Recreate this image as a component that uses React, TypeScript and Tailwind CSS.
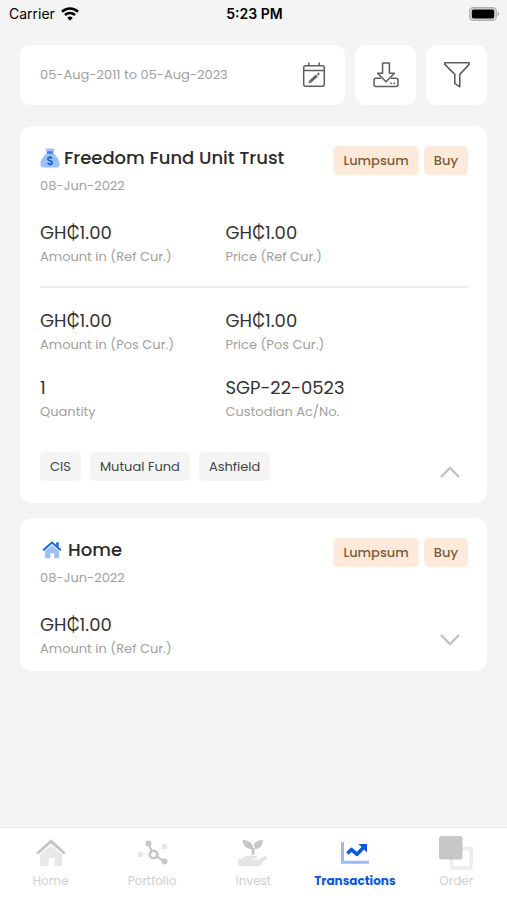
import type { ReactNode } from "react";

function WifiIcon() {
  return (
    <svg width="18" height="14" viewBox="0 0 18 14" fill="none" stroke="#000" strokeWidth="2.6" aria-hidden="true">
      <path d="M1 4.8a11.4 11.4 0 0 1 16 0" />
      <path d="M4 8a7.2 7.2 0 0 1 10 0" />
      <path d="M9 13.8 6.3 10.8a4 4 0 0 1 5.4 0Z" fill="#000" stroke="none" />
    </svg>
  );
}

function BatteryIcon() {
  return (
    <svg width="31" height="14" viewBox="0 0 31 14" aria-hidden="true">
      <rect x="0.75" y="0.75" width="26.5" height="12.5" rx="3.5" fill="#e0e0e0" stroke="#b0b0b0" strokeWidth="1.3" />
      <rect x="2.8" y="2.6" width="22.4" height="8.8" rx="1.6" fill="#000" />
      <path d="M28.7 4.8c2 .8 2 3.6 0 4.4Z" fill="#a8a8a8" />
    </svg>
  );
}

function CalendarIcon() {
  return (
    <svg width="24" height="26" viewBox="0 0 24 26" fill="none" stroke="#5e5e5e" strokeWidth="1.5" aria-hidden="true">
      <rect x="1.7" y="3.7" width="20.6" height="20.6" rx="2" />
      <path d="M1.7 8.6h20.600M6.8 0.500v3.500M17.200 0.500v3.500" />
      <path d="m8.600 19.200 6.200-5.800" strokeWidth="2.8" />
      <path d="m6.800 21 .7-2.400 1.700 1.800ZM15.2 12l1.400-1.200 1 1.100-1.400 1.300Z" fill="#5e5e5e" strokeWidth="0.6" />
    </svg>
  );
}

function DownloadIcon() {
  return (
    <svg width="26" height="26" viewBox="0 0 26 26" fill="none" stroke="#5e5e5e" strokeWidth="1.5" strokeLinejoin="round" aria-hidden="true">
      <path d="M9.6 1h6.8v10.200h5L13 19.800l-8.400-8.600h5Z" />
      <path d="M8 16.200H3a2 2 0 0 0-2 2v4.4a2 2 0 0 0 2 2h20a2 2 0 0 0 2-2v-4.4a2 2 0 0 0-2-2h-5" />
      <path d="M17.2 21.2h1.6M20.4 21.2H22" />
    </svg>
  );
}

function FilterIcon() {
  return (
    <svg width="28" height="28" viewBox="0 0 28 28" fill="none" stroke="#5e5e5e" strokeWidth="1.6" strokeLinejoin="round" aria-hidden="true">
      <path d="M1.8 1.8h24.4v1.600L16.800 13.400v12.400l-5-3.400V13.400L1.8 3.400Z" />
    </svg>
  );
}

function MoneyBagIcon() {
  return (
    <svg width="20" height="20" viewBox="0 0 20 20" aria-hidden="true">
      <path d="M5.2.4c1.600.6 2.900.2 4.700.2s3.200.4 4.800-.2L13 4.200H7Z" fill="#9dc0fa" />
      <path d="M6.600 5.600h6.800c3.200 2.200 6.200 6.600 6.200 10.600 0 2.200-1.200 3.400-3.400 3.400H3.800c-2.200 0-3.400-1.200-3.400-3.400 0-4 3-8.400 6.200-10.600Z" fill="#9dc0fa" />
      <path d="M6.800 3.300h6.400v2.500H6.800Z" fill="#3f7ff0" />
      <path d="M12.200 10.400c-.5-.8-1.300-1-2.200-1-1.300 0-2.200.6-2.200 1.600 0 2.300 4.600 1 4.600 3.400 0 1-1 1.700-2.300 1.700-1.200 0-2.100-.4-2.500-1.200M10 8v1.400M10 16v1.600" fill="none" stroke="#0b5be0" strokeWidth="1.500" />
    </svg>
  );
}

function HouseIcon({ className, roof, wall, chimney }: { className: string; roof: string; wall: string; chimney?: boolean }) {
  return (
    <svg className={className} viewBox="0 0 30 28" aria-hidden="true">
      <path d="M4 15.500 15 6.500l11 9V27h-7.500v-8h-6v8H4Z" fill={wall} />
      <path d="M1.300 14.500 15 2.300l13.700 12.200" fill="none" stroke={roof} strokeWidth="3" />
      {chimney && <path d="M21.500 2h4v8l-4-3Z" fill={roof} />}
    </svg>
  );
}

function PortfolioIcon() {
  return (
    <svg width="32" height="26" viewBox="0 0 32 26" aria-hidden="true">
      <path d="M4.500 14.500 17 14l11-7" fill="none" stroke="#f2f2f2" strokeWidth="1.200" />
      <circle cx="4.500" cy="14.500" r="2.700" fill="#e4e4e4" />
      <circle cx="28.500" cy="6.500" r="2.700" fill="#e4e4e4" />
      <path d="m12 3.500 5.500 11 11 7" fill="none" stroke="#c6c6c6" strokeWidth="2.200" />
      <circle cx="12.500" cy="3.500" r="3" fill="#c6c6c6" />
      <circle cx="28.500" cy="21.500" r="3" fill="#c6c6c6" />
      <circle cx="17.500" cy="14.500" r="3.800" fill="#fff" stroke="#c6c6c6" strokeWidth="2.600" />
    </svg>
  );
}

function InvestIcon() {
  return (
    <svg width="30" height="28" viewBox="0 0 30 28" aria-hidden="true">
      <path d="M4.500 1c6 0 10.300 2.600 10.800 9.200C9 10.400 4.800 7.200 4.500 1Z" fill="#c6c6c6" />
      <path d="M24.800 1c0 5.400-2.600 8.600-7.600 9.200-.5-2-.8-3-1.600-4.400C17.400 2.600 20.400 1 24.800 1Z" fill="#c6c6c6" />
      <path d="M13.600 9h3v6.800h-3Z" fill="#c6c6c6" />
      <path d="M0 20h4c2.500-2.800 5-3.200 8-3.200h6c2 0 2 3 0 3h-4v1h6l6.500-3.600c1.800-1 3.500.5 2.400 2L23.500 25c-1 1.400-2 2-4 2H0Z" fill="#e4e4e4" />
    </svg>
  );
}

function TransactionsIcon() {
  return (
    <svg width="28" height="22" viewBox="0 0 28 22" fill="none" aria-hidden="true">
      <path d="M1.500 0v20.200H28" stroke="#9db9f2" strokeWidth="3" />
      <path d="m6.500 11.500 4-4 5.500 4.800 6-6.300" stroke="#0b57e0" strokeWidth="3.600" strokeLinejoin="round" />
      <path d="M17.500 2H26v8.500Z" fill="#0b57e0" />
    </svg>
  );
}

function OrderIcon() {
  return (
    <svg width="34" height="34" viewBox="0 0 34 34" aria-hidden="true">
      <path d="M12.500 12.500h19.500v19.500H12.500Z" fill="none" stroke="#ececec" strokeWidth="3.400" />
      <rect x="0" y="0" width="23.500" height="23.500" rx="2.500" fill="#c8c8c8" />
    </svg>
  );
}

function Chevron({ up }: { up: boolean }) {
  return (
    <svg width="20" height="12" viewBox="0 0 20 12" fill="none" stroke="#c4c4c4" strokeWidth="2.400" aria-hidden="true">
      <path d={up ? "M1 11 10 2l9 9" : "m1 1 9 9 9-9"} />
    </svg>
  );
}

function Field({ value, label }: { value: string; label: string }) {
  return (
    <div>
      <dd className="text-[18px] leading-6 text-[#333333]">{value}</dd>
      <dt className="mt-[3px] text-[13px] leading-[18px] text-[#a0a0a0]">{label}</dt>
    </div>
  );
}

function CardHeader({ icon, title, gap }: { icon: ReactNode; title: string; gap: string }) {
  return (
    <header className="flex items-start justify-between">
      <div>
        <h2 className={`flex items-center text-[18px] leading-6 font-medium text-[#2b2b2b] ${gap}`}>
          {icon}
          {title}
        </h2>
        <p className="mt-[7px] text-[13px] leading-[18px] text-[#a0a0a0]">08-Jun-2022</p>
      </div>
      <div className="flex gap-[5px] text-[13px] leading-[29px] font-medium text-[#7d5a37]">
        <span className="rounded-[5px] bg-[#feeadb] px-[10px]">Lumpsum</span>
        <span className="rounded-[5px] bg-[#feeadb] px-[10px]">Buy</span>
      </div>
    </header>
  );
}

function ToggleButton({ up }: { up: boolean }) {
  return (
    <button
      type="button"
      aria-expanded={up}
      aria-label={up ? "Hide details" : "Show details"}
      className="flex h-9 w-9 items-center justify-center"
    >
      <Chevron up={up} />
    </button>
  );
}

const cardClass = "rounded-[12px] bg-white pr-[19px] pl-5 pt-5 pb-[13px]";
const columns = "grid grid-cols-[13fr_17fr]";

const tabs = [
  { label: "Home", icon: <HouseIcon className="h-[28px] w-[30px]" roof="#c6c6c6" wall="#e8e8e8" /> },
  { label: "Portfolio", icon: <PortfolioIcon /> },
  { label: "Invest", icon: <InvestIcon /> },
  { label: "Transactions", icon: <TransactionsIcon />, active: true },
  { label: "Order", icon: <OrderIcon /> },
];

export default function App() {
  return (
    <div className="flex min-h-screen flex-col bg-[#f4f4f4] font-['Poppins','Inter','Noto_Sans',sans-serif]">
      <div className="grid h-7 grid-cols-3 items-center pr-[7px] pl-[9px] font-['Inter',sans-serif] text-[14px] leading-5 text-black">
        <div className="flex items-center gap-[6px]">
          Carrier
          <WifiIcon />
        </div>
        <div className="text-center font-semibold">5:23 PM</div>
        <div className="flex justify-end">
          <BatteryIcon />
        </div>
      </div>

      <main className="flex-1 px-5 pt-[17px] pb-5">
        <div className="flex h-[60px] gap-[10px]">
          <div className="flex min-w-0 flex-1 items-center rounded-[10px] bg-white pr-[19px] pl-5">
            <input
              type="text"
              readOnly
              aria-label="Date range"
              defaultValue="05-Aug-2011 to 05-Aug-2023"
              className="min-w-0 flex-1 bg-transparent text-[13px] leading-5 text-[#a0a0a0] outline-none"
            />
            <button type="button" aria-label="Pick dates">
              <CalendarIcon />
            </button>
          </div>
          <button type="button" aria-label="Download" className="flex w-[61px] items-center justify-center rounded-[10px] bg-white">
            <DownloadIcon />
          </button>
          <button type="button" aria-label="Filter" className="flex w-[61px] items-center justify-center rounded-[10px] bg-white">
            <FilterIcon />
          </button>
        </div>

        <article className={`mt-[21px] ${cardClass}`}>
          <CardHeader icon={<MoneyBagIcon />} title="Freedom Fund Unit Trust" gap="gap-1" />
          <dl className={`mt-[26px] ${columns}`}>
            <Field value="GH₵1.00" label="Amount in (Ref Cur.)" />
            <Field value="GH₵1.00" label="Price (Ref Cur.)" />
          </dl>
          <hr className="mt-5 border-t-2 border-[#eeeeee]" />
          <dl className={`mt-[21px] gap-y-[22px] ${columns}`}>
            <Field value="GH₵1.00" label="Amount in (Pos Cur.)" />
            <Field value="GH₵1.00" label="Price (Pos Cur.)" />
            <Field value="1" label="Quantity" />
            <Field value="SGP-22-0523" label="Custodian Ac/No." />
          </dl>
          <div className="mt-[31px] flex h-[38px] justify-between">
            <ul className="flex items-start gap-[9px] text-[13px] leading-[29px] text-[#444444]">
              <li className="rounded-[5px] bg-[#f4f4f4] px-[10px]">CIS</li>
              <li className="rounded-[5px] bg-[#f4f4f4] px-[10px]">Mutual Fund</li>
              <li className="rounded-[5px] bg-[#f4f4f4] px-[10px]">Ashfield</li>
            </ul>
            <div className="flex items-end">
              <ToggleButton up />
            </div>
          </div>
        </article>

        <article className={`mt-[15px] ${cardClass}`}>
          <CardHeader
            icon={<HouseIcon className="ml-[2px] h-[18px] w-[20px]" roof="#1763e6" wall="#9dc0fa" chimney />}
            title="Home"
            gap="gap-[6px]"
          />
          <div className="mt-[26px] flex items-end justify-between">
            <dl>
              <Field value="GH₵1.00" label="Amount in (Ref Cur.)" />
            </dl>
            <ToggleButton up={false} />
          </div>
        </article>
      </main>

      <nav className="grid h-[73px] grid-cols-5 border-t border-[#e6e6e6] bg-white pt-[7px]">
        {tabs.map((tab) => (
          <a
            key={tab.label}
            href="#"
            aria-current={tab.active ? "page" : undefined}
            className={`flex flex-col items-center text-[12px] leading-5 ${
              tab.active ? "font-bold text-[#0b57e0]" : "text-[#d0d0d0]"
            }`}
          >
            <span className="flex h-9 items-center justify-center">{tab.icon}</span>
            {tab.label}
          </a>
        ))}
      </nav>
    </div>
  );
}
